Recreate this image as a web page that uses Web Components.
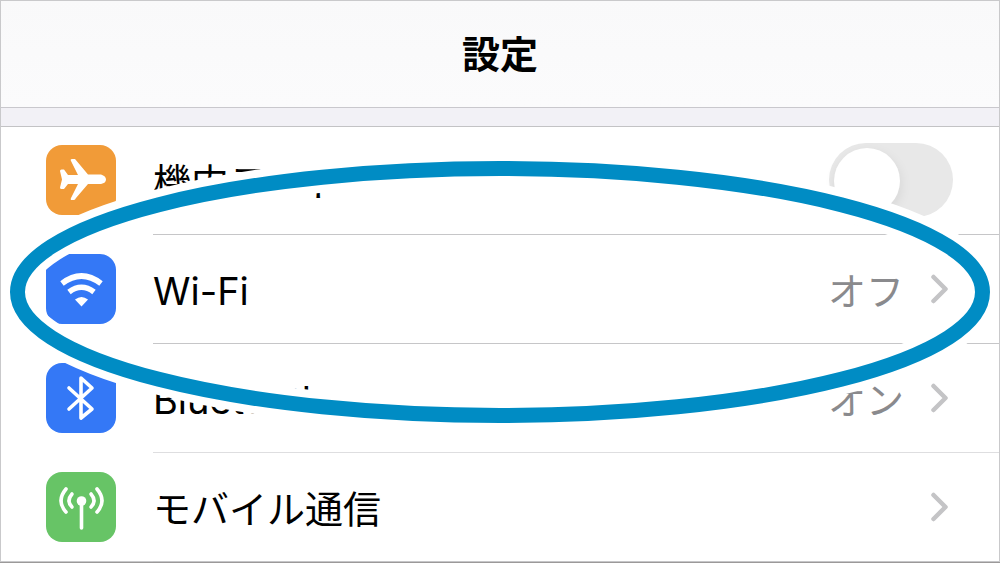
<!DOCTYPE html>
<html lang="ja">
<head>
<meta charset="utf-8">
<meta name="viewport" content="width=device-width, initial-scale=1">
<title>設定</title>
<style>
  body { margin: 0; background: #fff; font-family: Inter, "Noto Sans CJK JP", sans-serif; color: #000; }
</style>
</head>
<body>
<settings-page>
  <settings-header>設定</settings-header>
  <settings-list>
    <settings-row icon="airplane" kind="switch">機内モード</settings-row>
    <settings-row icon="wifi" value="オフ">Wi-Fi</settings-row>
    <settings-row icon="bluetooth" value="オン">Bluetooth</settings-row>
    <settings-row icon="cellular">モバイル通信</settings-row>
  </settings-list>
  <highlight-ring slot="overlay"></highlight-ring>
</settings-page>

<script>
const define = (name, html, setup) => customElements.define(name, class extends HTMLElement {
  connectedCallback() {
    if (this.shadowRoot) return;
    const template = document.createElement('template');
    template.innerHTML = html;
    this.attachShadow({ mode: 'open' }).append(template.content.cloneNode(true));
    if (setup) setup(this, this.shadowRoot);
  }
});

define('settings-page', `
  <style>
    :host { display: block; position: relative; box-sizing: border-box; overflow: hidden; border-bottom: 1px solid #9b9999; }
    .frame { position: absolute; inset: 0; border: solid #c9c9cb; border-width: 1px 1px 0; pointer-events: none; }
  </style>
  <main><slot></slot></main>
  <div class="frame"></div>
  <slot name="overlay"></slot>
`);

define('settings-header', `
  <style>
    :host { display: block; background: #f2f1f6; padding-bottom: 18px; }
    header { display: flex; align-items: center; justify-content: center; box-sizing: border-box;
      height: 108px; padding-bottom: 4px; border-bottom: 1px solid #c9c8cd; background: linear-gradient(#f9f9fa, #fbfbfc); }
    h1 { margin: 0; font: 700 38px/56px "Noto Sans CJK JP", sans-serif; }
  </style>
  <header><h1><slot></slot></h1></header>
`);

define('settings-list', `
  <style>
    :host { display: block; box-shadow: inset 0 1px #c3c3c5; }
  </style>
  <div role="list"><slot></slot></div>
`);

const icons = {
  airplane: ['#f19b38', `<path fill="#fff" d="M14 26 Q14 24.500 15.500 24.500 H18 L22 30 L32 30 L25 16 Q24 14 26 14 H29 L42 29.500 H55 Q60 31 60 34.500 Q60 38 55 39 H42 L30 53 Q29 55 28 55 H26 Q24 55 25 53 L32 39 L22 39 L18 44 H15.500 Q14 44 14 42.500 L16 34.500 Z"/>`],
  wifi: ['#3478f6', `<g fill="none" stroke="#fff" stroke-width="5.600"><path d="M16 29.500 Q35.500 14.500 55 29.500"/><path d="M23 38 Q35.500 28.500 48 38"/></g><path fill="#fff" d="M29 45.500 Q35.500 40.500 42 45.500 L35.500 52.500 Z"/>`],
  bluetooth: ['#3478f6', `<path fill="none" stroke="#fff" stroke-width="3.600" stroke-linecap="round" stroke-linejoin="round" d="M23 25 L46 46 L35 55 V15 L46 25 L23 46"/>`],
  cellular: ['#67c466', `<g fill="none" stroke="#fff" stroke-width="3.600" stroke-linecap="round"><path d="M35.500 29 V56"/><path d="M26 22 Q20 29 26 35 M45 22 Q51 29 45 35"/><path d="M20 17 Q10 29 20 40 M51 17 Q61 29 51 40"/></g><circle cx="35.500" cy="29" r="4.800" fill="#fff"/>`]
};

define('settings-icon', `
  <style>
    :host { display: block; flex: none; width: 70px; height: 70px; border-radius: 16px; overflow: hidden; }
    svg { display: block; width: 100%; height: 100%; }
  </style>
  <svg viewBox="0 0 70 70" aria-hidden="true"></svg>
`, (host, root) => {
  const [color, shape] = icons[host.getAttribute('name')];
  host.style.background = color;
  root.querySelector('svg').innerHTML = shape;
});

define('settings-row', `
  <style>
    :host { display: block; --line: #c6c6c8; }
    :host(:nth-of-type(3)) { --line: #dedee0; }
    .row { display: flex; align-items: center; height: 109px; padding-left: 46px; gap: 37px;
      color: inherit; text-decoration: none; }
    :host(:last-of-type) .row { box-shadow: inset 0 -1px #c9c9cb; }
    settings-icon { margin-bottom: 2px; }
    .body { flex: 1; display: flex; align-items: center; box-sizing: border-box; height: 100%;
      gap: 27px; padding-right: 52px; border-bottom: 1px solid var(--line); }
    .body.switch { padding-right: 47px; }
    .label, .value { padding-top: 4px; font-size: 38px; line-height: 56px; font-weight: 400; }
    .label { flex: 1; }
    .value { color: #8a8a8d; }
    .chevron { display: block; width: 17px; height: 30px; }
    input { appearance: none; flex: none; margin: 0; width: 124px; height: 74px; border-radius: 37px;
      background: #e8e8e8; padding: 5px; }
    input::before { content: ""; display: block; width: 66px; height: 66px; border-radius: 50%; background: #fff;
      box-shadow: 1px 4px 12px rgb(0 0 0 / 8%); }
    input:checked { background: #67c466; }
    input:checked::before { margin-left: 48px; }
  </style>
`, (host, root) => {
  const icon = `<settings-icon name="${host.getAttribute('icon')}"></settings-icon>`;
  const value = host.getAttribute('value');
  host.setAttribute('role', 'listitem');
  const row = document.createElement('template');
  row.innerHTML = host.getAttribute('kind') === 'switch'
    ? `<div class="row">${icon}<div class="body switch">
         <label class="label" for="toggle"><slot></slot></label>
         <input id="toggle" type="checkbox" role="switch"></div></div>`
    : `<a class="row" href="#${host.getAttribute('icon')}">${icon}<div class="body">
         <span class="label"><slot></slot></span>
         ${value ? `<span class="value">${value}</span>` : ''}
         <svg class="chevron" viewBox="0 0 17 30" aria-hidden="true"><path d="M2.500 3 L14.500 15 L2.500 27" fill="none" stroke="#c4c4c6" stroke-width="4.500" stroke-linecap="round" stroke-linejoin="round"/></svg></div></a>`;
  root.append(row.content);
});

define('highlight-ring', `
  <style>
    :host { display: block; position: absolute; inset: 0; pointer-events: none; }
    svg { display: block; width: 100%; height: 100%; }
    ellipse { fill: none; }
    .halo { stroke: #fff; stroke-width: 31px; }
    .ring { stroke: #008cc4; stroke-width: 15px; }
  </style>
  <svg aria-hidden="true">
    <ellipse class="halo" cx="50%" cy="292" rx="48.250%" ry="123.500"/>
    <ellipse class="ring" cx="50%" cy="292" rx="48.250%" ry="123.500"/>
  </svg>
`);
</script>
</body>
</html>
